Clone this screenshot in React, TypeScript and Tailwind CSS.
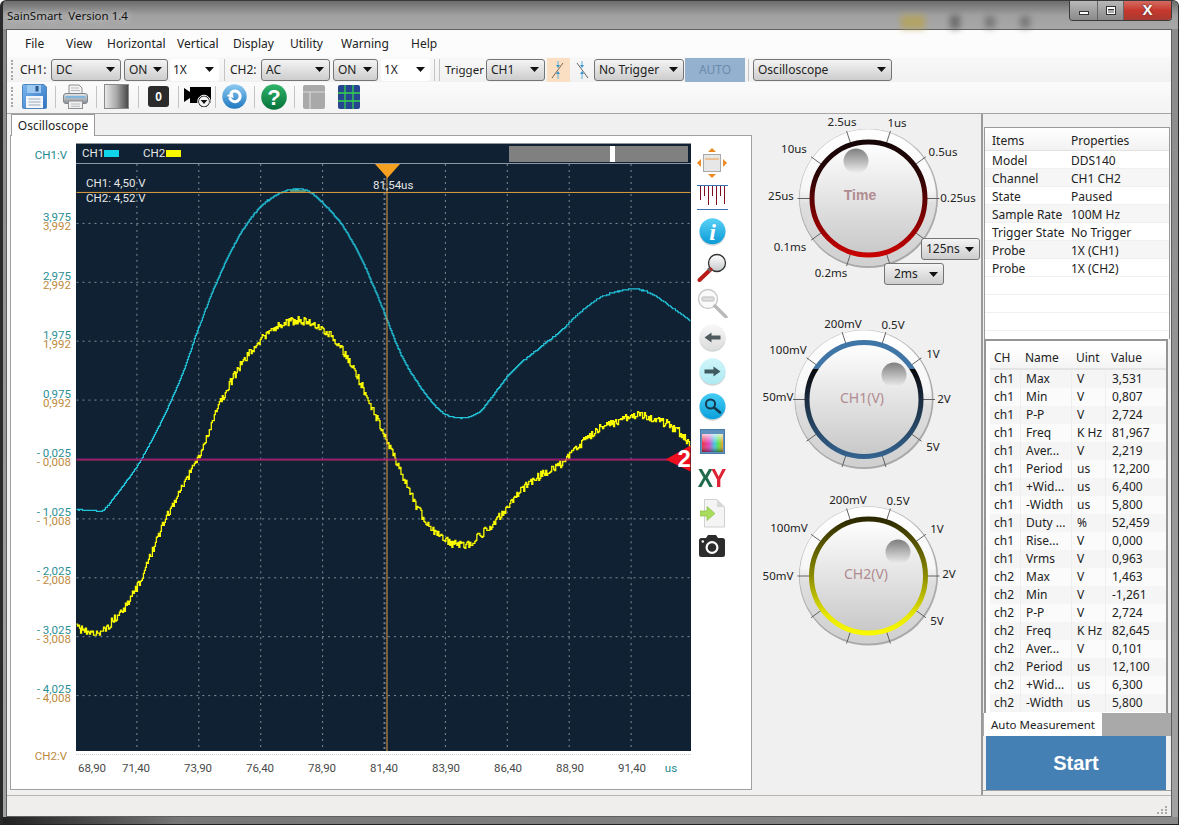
import React from "react";

type P = [number, number];

const cyanPts: P[] = [[76,509],[90,510],[102,510],[112,499],[125,482],[140,460],[160,422],[180,378],[200,322],[220,272],[240,233],[260,206],[280,192],[290,189],[305,189],[320,200],[340,222],[360,256],[380,302],[400,352],[420,386],[440,410],[455,417],[470,416],[482,409],[495,392],[510,373],[525,359],[540,347],[560,331],[580,312],[600,297],[620,290],[635,288],[650,292],[670,305],[690,320]];
const yellowPts: P[] = [[76,628],[90,631],[102,631],[112,621],[125,606],[140,580],[160,530],[180,490],[200,452],[220,402],[240,365],[260,340],[280,325],[300,320],[320,327],[340,346],[360,382],[380,425],[400,470],[420,512],[440,536],[465,545],[480,535],[500,516],[520,491],[540,475],[560,465],[580,445],[600,428],[620,420],[640,415],[660,420],[680,432],[690,443]];

function trace(points: P[], noise: number, seed: number) {
  let s = seed;
  const rnd = () => {
    s = (s * 16807) % 2147483647;
    return s / 2147483647 - 0.5;
  };
  const out: string[] = [];
  let seg = 0;
  for (let x = 76; x <= 690; x += 1) {
    while (seg < points.length - 2 && x > points[seg + 1][0]) seg++;
    const [x0, y0] = points[seg];
    const [x1, y1] = points[seg + 1];
    const prev = points[Math.max(seg - 1, 0)];
    const next = points[Math.min(seg + 2, points.length - 1)];
    const h = x1 - x0;
    const t = (x - x0) / h;
    const m0 = ((y1 - prev[1]) / (x1 - prev[0])) * h;
    const m1 = ((next[1] - y0) / (next[0] - x0)) * h;
    const y =
      (2 * t * t * t - 3 * t * t + 1) * y0 +
      (t * t * t - 2 * t * t + t) * m0 +
      (-2 * t * t * t + 3 * t * t) * y1 +
      (t * t * t - t * t) * m1;
    const v = Math.round(y + rnd() * noise);
    out.push(`${x},${v} ${x + 1},${v}`);
  }
  return out.join(" ");
}

const cyanLine = trace(cyanPts, 1, 12345);
const yellowLine = trace(yellowPts, 8, 777);

const Caret = () => (
  <svg width="9" height="5" viewBox="0 0 9 5" className="shrink-0">
    <path d="M0 0h9L4.5 5z" fill="#111" />
  </svg>
);

function Sel({ label, cls, plain }: { label: string; cls: string; plain?: boolean }) {
  return (
    <div
      className={
        cls +
        " shrink-0 flex items-center justify-between pr-[5px] h-[22px] rounded-[3px] text-[12px] text-[#222] " +
        (plain
          ? "bg-white pl-[3px]"
          : "pl-[4px] border border-[#757575] bg-gradient-to-b from-[#f4f4f4] to-[#cdcdcd]")
      }
    >
      <span>{label}</span>
      <Caret />
    </div>
  );
}

const Sep = ({ cls }: { cls: string }) => <div className={cls + " shrink-0 w-px h-[22px] bg-[#c4c4c4]"} />;

const Grip = ({ cls }: { cls: string }) => (
  <div className={cls + " shrink-0 w-[2px] h-[20px] border-l-2 border-dotted border-[#a8a8a8]"} />
);

/* ---------- toolbar icons ---------- */
const SaveIcon = () => (
  <svg width="25" height="25" viewBox="0 0 25 25" className="ml-[9px] shrink-0">
    <defs>
      <linearGradient id="sv" x1="0" y1="0" x2="1" y2="1">
        <stop offset="0" stopColor="#7db7ee" />
        <stop offset="1" stopColor="#2f72c4" />
      </linearGradient>
    </defs>
    <path d="M0.5 1.5a1 1 0 0 1 1-1H22l2.5 2.5V23.5a1 1 0 0 1-1 1H1.5a1 1 0 0 1-1-1z" fill="url(#sv)" stroke="#4f86c0" />
    <rect x="5" y="1" width="14" height="8" fill="#9dc8ef" />
    <rect x="13.5" y="2" width="3" height="5.5" fill="#26598f" />
    <rect x="4" y="12" width="17" height="12" fill="#f4f7fa" />
    <path d="M6.5 15h12M6.5 18h12M6.5 21h12" stroke="#9aa9b8" />
  </svg>
);
const PrintIcon = () => (
  <svg width="25" height="25" viewBox="0 0 25 25" className="ml-[7px] shrink-0">
    <defs>
      <linearGradient id="pr" x1="0" y1="0" x2="0" y2="1">
        <stop offset="0" stopColor="#e2e5e8" />
        <stop offset="1" stopColor="#878d93" />
      </linearGradient>
    </defs>
    <path d="M6 1h10l3 3v6H6z" fill="#f3f3f3" stroke="#8b8f93" />
    <path d="M8 4h8M8 6.5h9" stroke="#b7bbbf" />
    <rect x="0.5" y="9.5" width="24" height="10" rx="2.5" fill="url(#pr)" stroke="#7e8488" />
    <rect x="2.5" y="12" width="20" height="2" fill="#7fb6e0" />
    <rect x="5.5" y="17" width="14" height="7.5" fill="#f1f1f1" stroke="#8b8f93" />
    <path d="M8 20h9M8 22.3h9" stroke="#b7bbbf" />
  </svg>
);
const GradIcon = () => (
  <div className="ml-[7px] shrink-0 w-[25px] h-[25px] border border-[#8b8b8b] bg-gradient-to-r from-[#e8e8e8] via-[#a8a8a8] to-[#4a4a4a]" />
);
const ZeroIcon = () => (
  <div className="ml-[9px] shrink-0 w-[21px] h-[21px] rounded-[3px] bg-[#2b2b2b] text-white text-[12px] font-bold flex items-center justify-center font-['Liberation_Sans']">
    0
  </div>
);
const RecIcon = () => (
  <svg width="27" height="25" viewBox="0 0 27 25" className="ml-[5px] shrink-0">
    <path d="M0 4l6 4V3h21v16H6v-5l-6 4z" fill="#000" />
    <circle cx="20" cy="17.5" r="6.3" fill="#222" stroke="#fff" />
    <circle cx="20" cy="17.5" r="5" fill="#f4f4f4" />
    <path d="M16.7 16h6.6L20 20z" fill="#111" />
  </svg>
);
const RefreshIcon = () => (
  <svg width="25" height="25" viewBox="0 0 25 25" className="ml-[6px] shrink-0">
    <defs>
      <linearGradient id="rf" x1="0" y1="0" x2="0" y2="1">
        <stop offset="0" stopColor="#8ecbf2" />
        <stop offset="1" stopColor="#1e78c0" />
      </linearGradient>
    </defs>
    <circle cx="12.5" cy="12.5" r="12.2" fill="url(#rf)" />
    <path d="M8 14.5a5.3 5.3 0 1 0 1.2-6" fill="none" stroke="#fff" strokeWidth="3" strokeLinecap="round" />
    <path d="M4.5 12l6-4.5 1 6.5z" fill="#fff" />
  </svg>
);
const HelpIcon = () => (
  <svg width="26" height="26" viewBox="0 0 26 26" className="ml-[6px] shrink-0">
    <defs>
      <linearGradient id="hp" x1="0" y1="0" x2="0" y2="1">
        <stop offset="0" stopColor="#2fb56a" />
        <stop offset="1" stopColor="#06723a" />
      </linearGradient>
    </defs>
    <circle cx="13" cy="13" r="12.8" fill="url(#hp)" />
    <text x="13" y="20.5" textAnchor="middle" fill="#fff" fontSize="22" fontWeight="700" fontFamily="Liberation Sans">?</text>
  </svg>
);
const TableIcon = () => (
  <svg width="22" height="24" viewBox="0 0 22 24" className="ml-[8px] shrink-0">
    <rect width="22" height="24" rx="2" fill="#a9a9a9" />
    <path d="M0 7h22M7 7v17" stroke="#d9d9d9" strokeWidth="1.2" />
  </svg>
);
const GridIcon = () => (
  <svg width="22" height="24" viewBox="0 0 22 24" className="ml-[13px] shrink-0">
    <rect width="22" height="24" rx="2" fill="#26468f" />
    <path d="M0 8h22M0 16h22M7 0v24M15 0v24" stroke="#34d24e" strokeWidth="1.3" />
  </svg>
);

const EdgeUp = () => (
  <svg width="17" height="20" viewBox="0 0 17 20">
    <path d="M2 18L13 3" fill="none" stroke="#6a5a4a" strokeWidth="0.9" />
    <path d="M8 1v5M8 19v-6" stroke="#5fb0dc" strokeWidth="1" />
    <path d="M6 5h4l-2 3zM6 14h4l-2-3z" fill="#3a95c8" />
  </svg>
);
const EdgeDown = () => (
  <svg width="17" height="20" viewBox="0 0 17 20">
    <path d="M3 3l11 15" fill="none" stroke="#555" strokeWidth="0.9" />
    <path d="M8 1v5M8 19v-6" stroke="#5fb0dc" strokeWidth="1" />
    <path d="M6 5h4l-2 3zM6 14h4l-2-3z" fill="#3a95c8" />
  </svg>
);

/* ---------- side icons ---------- */
const Sphere = ({ id, top, bottom, children }: { id: string; top: string; bottom: string; children?: React.ReactNode }) => (
  <svg width="27" height="28" viewBox="0 0 27 28">
    <defs>
      <linearGradient id={id} x1="0" y1="0" x2="0" y2="1">
        <stop offset="0" stopColor={top} />
        <stop offset="1" stopColor={bottom} />
      </linearGradient>
    </defs>
    <ellipse cx="13.5" cy="15" rx="13" ry="12.8" fill="#9aa3a8" opacity="0.45" />
    <circle cx="13.5" cy="13.2" r="13" fill={`url(#${id})`} />
    {children}
  </svg>
);

const sideIcons: { h: string; el: React.ReactNode }[] = [
  {
    h: "h-[34px]",
    el: (
      <svg width="30" height="30" viewBox="0 0 30 30">
        <path d="M15 0l4 4h-8zM15 30l-4-4h8zM0 15l4-4v8zM30 15l-4 4v-8z" fill="#e98a22" />
        <rect x="6.5" y="6.5" width="17" height="17" fill="#e7e7e7" stroke="#a9a9a9" />
        <path d="M8 11h14" stroke="#ef9a3f" strokeWidth="1.2" />
      </svg>
    ),
  },
  {
    h: "h-[35px]",
    el: (
      <svg width="31" height="25" viewBox="0 0 31 25">
        <path d="M0 .5h31M0 24.5h31" stroke="#3f6fb0" />
        <path d="M3.5 1v14M7.5 1v10M11.5 1v19M15.5 1v10M19.5 1v19M23.5 1v10M27.5 1v18" stroke="#7d1020" />
      </svg>
    ),
  },
  {
    h: "h-[34px]",
    el: (
      <Sphere id="inf" top="#5bd2f6" bottom="#0b9ad6">
        <text x="13.5" y="22" textAnchor="middle" fill="#fff" fontSize="24" fontWeight="700" fontStyle="italic" fontFamily="Liberation Serif">i</text>
      </Sphere>
    ),
  },
  {
    h: "h-[37px]",
    el: (
      <svg width="30" height="30" viewBox="0 0 30 30">
        <defs>
          <linearGradient id="mg" x1="0" y1="0" x2="0" y2="1">
            <stop offset="0" stopColor="#fff" />
            <stop offset="1" stopColor="#c4c8ca" />
          </linearGradient>
        </defs>
        <circle cx="20" cy="10" r="8.5" fill="url(#mg)" stroke="#333" strokeWidth="1.3" />
        <path d="M13.5 16.5L2.5 27" stroke="#b81c18" strokeWidth="4" strokeLinecap="round" />
        <path d="M13 16l-1.5 1.5" stroke="#666" strokeWidth="4" />
      </svg>
    ),
  },
  {
    h: "h-[34px]",
    el: (
      <svg width="31" height="30" viewBox="0 0 31 30">
        <circle cx="11" cy="11" r="9.5" fill="#fafafa" stroke="#c9c9c9" strokeWidth="1.4" />
        <rect x="5" y="9" width="12" height="4" rx="1" fill="#dedede" stroke="#bdbdbd" />
        <path d="M18 18l11 11" stroke="#b9b9b9" strokeWidth="3.4" strokeLinecap="round" />
      </svg>
    ),
  },
  {
    h: "h-[35px]",
    el: (
      <Sphere id="bk" top="#f8f8f8" bottom="#dcdcdc">
        <path d="M5.5 13.5l7-5v3h9v4h-9v3z" fill="#4f5a5e" />
      </Sphere>
    ),
  },
  {
    h: "h-[33px]",
    el: (
      <Sphere id="fw" top="#cff5fa" bottom="#aeeaf2">
        <path d="M21.5 13.5l-7-5v3h-9v4h9v3z" fill="#3f5a60" />
      </Sphere>
    ),
  },
  {
    h: "h-[37px]",
    el: (
      <Sphere id="sr" top="#46cdf5" bottom="#0aa0dc">
        <circle cx="11.5" cy="11" r="4.6" fill="none" stroke="#163a4e" strokeWidth="2" />
        <path d="M15 14.5l6 5" stroke="#163a4e" strokeWidth="2.6" strokeLinecap="round" />
      </Sphere>
    ),
  },
  {
    h: "h-[32px]",
    el: (
      <svg width="25" height="25" viewBox="0 0 25 25">
        <defs>
          <linearGradient id="rb" x1="0" y1="0" x2="1" y2="0">
            <stop offset="0" stopColor="#e8303a" />
            <stop offset="0.33" stopColor="#e040c0" />
            <stop offset="0.6" stopColor="#40c8e0" />
            <stop offset="0.8" stopColor="#60e040" />
            <stop offset="1" stopColor="#f0a020" />
          </linearGradient>
          <linearGradient id="rbw" x1="0" y1="0" x2="0" y2="1">
            <stop offset="0" stopColor="#fff" stopOpacity="0.75" />
            <stop offset="0.55" stopColor="#fff" stopOpacity="0" />
            <stop offset="1" stopColor="#000" stopOpacity="0.45" />
          </linearGradient>
        </defs>
        <rect x="0.5" y="0.5" width="24" height="24" fill="#5f91bf" stroke="#4a7aa8" />
        <rect x="2" y="5" width="21" height="18" fill="url(#rb)" />
        <rect x="2" y="5" width="21" height="18" fill="url(#rbw)" />
      </svg>
    ),
  },
  {
    h: "h-[42px]",
    el: (
      <div className="flex font-['Liberation_Sans'] font-bold text-[23px] leading-none h-[21px] items-center tracking-[-2px] pr-[2px] scale-y-[1.1]">
        <span className="text-[#1f6b4c]">X</span>
        <span className="text-[#dd2333]">Y</span>
      </div>
    ),
  },
  {
    h: "h-[29px]",
    el: (
      <svg width="25" height="29" viewBox="0 0 25 29">
        <path d="M4.5 .5H17l7.5 7.5v20H4.5z" fill="#f4f4f4" stroke="#d0d0d0" />
        <path d="M17 .5V8h7.5z" fill="#d8d8d8" />
        <path d="M0 12h7V7.5L15 14.5 7 21.5V17H0z" fill="#a9dc5c" stroke="#7fb83c" strokeWidth=".6" />
      </svg>
    ),
  },
  {
    h: "h-[36px]",
    el: (
      <svg width="26" height="26" viewBox="0 0 26 26">
        <path d="M2.5 5h4.5l2-3h8l2 3h4.500a2.500 2.500 0 0 1 2.500 2.500V21.500a2.500 2.500 0 0 1-2.500 2.500H2.500A2.500 2.500 0 0 1 0 21.500V7.500A2.500 2.500 0 0 1 2.500 5z" fill="#2c2c2c" />
        <circle cx="13" cy="14.500" r="6.500" fill="#fff" />
        <circle cx="13" cy="14.500" r="4.300" fill="#2c2c2c" />
        <circle cx="3.800" cy="8.500" r="1.200" fill="#fff" />
      </svg>
    ),
  },
];

/* ---------- dials ---------- */
type DialLabel = [string, number, number];

function Dial({
  id,
  cls,
  vb,
  cx,
  cy,
  ringR,
  stops,
  dim,
  title,
  tx,
  ty,
  bold,
  labels,
}: {
  id: string;
  cls: string;
  vb: string;
  cx: number;
  cy: number;
  ringR: number;
  stops: [number, string][];
  dim: P;
  title: string;
  tx: number;
  ty: number;
  bold?: boolean;
  labels: DialLabel[];
}) {
  const angles = [18, 54, 90, 126, 162, 198, 234, 270, 306, 342];
  return (
    <svg viewBox={vb} className={cls + " block shrink-0"}>
      <defs>
        <linearGradient id={id + "b"} x1="0" y1="0" x2="0" y2="1">
          <stop offset="0" stopColor="#ffffff" />
          <stop offset="0.45" stopColor="#f6f6f6" />
          <stop offset="0.55" stopColor="#dedede" />
          <stop offset="1" stopColor="#d0d0d0" />
        </linearGradient>
        <linearGradient id={id + "f"} x1="0" y1="0" x2="0" y2="1">
          <stop offset="0" stopColor="#ffffff" />
          <stop offset="1" stopColor="#c8c8c8" />
        </linearGradient>
        <linearGradient id={id + "r"} gradientUnits="userSpaceOnUse" x1="0" y1={cy - ringR} x2="0" y2={cy + ringR}>
          {stops.map(([o, c]) => (
            <stop key={o} offset={o} stopColor={c} />
          ))}
        </linearGradient>
        <linearGradient id={id + "d"} x1="0" y1="0" x2="0" y2="1">
          <stop offset="0" stopColor="#7e7e7e" />
          <stop offset="1" stopColor="#f0f0f0" />
        </linearGradient>
      </defs>
      <circle cx={cx} cy={cy} r="69.5" fill="#a9a9a9" />
      <circle cx={cx - 0.5} cy={cy - 1} r="68.5" fill="#d6d6d6" />
      <circle cx={cx - 0.5} cy={cy - 1} r="68" fill={`url(#${id}b)`} />
      {angles.map((a) => {
        const r = (a * Math.PI) / 180;
        return (
          <line
            key={a}
            x1={cx + Math.sin(r) * ringR}
            y1={cy - Math.cos(r) * ringR}
            x2={cx + Math.sin(r) * 71}
            y2={cy - Math.cos(r) * 71}
            stroke="#555"
            strokeWidth="0.9"
          />
        );
      })}
      <circle cx={cx} cy={cy} r={ringR} fill={`url(#${id}f)`} stroke={`url(#${id}r)`} strokeWidth="5" />
      <circle cx={dim[0]} cy={dim[1]} r="12.500" fill={`url(#${id}d)`} />
      <text
        x={tx}
        y={ty}
        textAnchor="middle"
        dominantBaseline="central"
        fill="#b18b90"
        className={bold ? "font-['Liberation_Sans'] font-bold text-[14px]" : "text-[14px]"}
      >
        {title}
      </text>
      {labels.map(([t, x, y]) => (
        <text key={t} x={x} y={y} textAnchor="middle" dominantBaseline="central" fill="#222" className="text-[11.500px]">
          {t}
        </text>
      ))}
    </svg>
  );
}

/* ---------- tables ---------- */
const props: [string, string][] = [
  ["Model", "DDS140"],
  ["Channel", "CH1 CH2"],
  ["State", "Paused"],
  ["Sample Rate", "100M Hz"],
  ["Trigger State", "No Trigger"],
  ["Probe", "1X (CH1)"],
  ["Probe", "1X (CH2)"],
  ["", ""],
  ["", ""],
  ["", ""],
];

const meas: [string, string, string, string][] = [
  ["ch1", "Max", "V", "3,531"],
  ["ch1", "Min", "V", "0,807"],
  ["ch1", "P-P", "V", "2,724"],
  ["ch1", "Freq", "K Hz", "81,967"],
  ["ch1", "Aver...", "V", "2,219"],
  ["ch1", "Period", "us", "12,200"],
  ["ch1", "+Wid...", "us", "6,400"],
  ["ch1", "-Width", "us", "5,800"],
  ["ch1", "Duty ...", "%", "52,459"],
  ["ch1", "Rise...", "V", "0,000"],
  ["ch1", "Vrms", "V", "0,963"],
  ["ch2", "Max", "V", "1,463"],
  ["ch2", "Min", "V", "-1,261"],
  ["ch2", "P-P", "V", "2,724"],
  ["ch2", "Freq", "K Hz", "82,645"],
  ["ch2", "Aver...", "V", "0,101"],
  ["ch2", "Period", "us", "12,100"],
  ["ch2", "+Wid...", "us", "6,300"],
  ["ch2", "-Width", "us", "5,800"],
];

const yLabels: [string, string][] = [
  ["3,975", "3,992"],
  ["2,975", "2,992"],
  ["1,975", "1,992"],
  ["0,975", "0,992"],
  ["- 0,025", "- 0,008"],
  ["- 1,025", "- 1,008"],
  ["- 2,025", "- 2,008"],
  ["- 3,025", "- 3,008"],
  ["- 4,025", "- 4,008"],
];

const gridX = [136.5, 198.5, 260.5, 322.5, 445.5, 507.5, 569.5, 631.5];
const gridY = [222.5, 281.5, 340.5, 399.5, 518.5, 577.5, 636.5, 695.5];
const xLabels = ["73,90", "76,40", "78,90", "81,40", "83,90", "86,40", "88,90", "91,40"];

export default function App() {
  return (
    <div className="w-[1179px] h-[825px] overflow-hidden flex flex-col font-['Noto_Sans',sans-serif] text-[#222] border-t border-b border-r border-l-[3px] border-t-[#3a3a3a] border-b-[#222] border-r-[#2a2a2a] border-l-[#2a2a2a] rounded-t-[6px] bg-gradient-to-b from-[#8a8a8a] to-[#a2a2a2]">
      {/* title bar */}
      <div className="h-[28px] shrink-0 flex justify-between bg-gradient-to-b from-[#6c6c6c] via-[#a0a0a0] to-[#a8a8a8]">
        <div className="pl-[4px] pt-[7px] text-[11.500px] leading-[16px] whitespace-pre text-[#111] [text-shadow:0_0_6px_#e8e8e8]">
          SainSmart  Version 1.4
        </div>
        <div className="flex items-center gap-[25px] mt-[14px] ml-auto mr-[39px] blur-[3px] opacity-70">
          <div className="w-[24px] h-[14px] bg-[#b8a24a]" />
          <div className="w-[10px] h-[14px] bg-[#555]" />
          <div className="w-[10px] h-[12px] bg-[#666]" />
          <div className="w-[10px] h-[12px] bg-[#666]" />
        </div>
        <div className="flex h-[20px] self-start shrink-0 mr-[6px] rounded-b-[4px] border border-t-0 border-[#3c3c3c] overflow-hidden">
          <div className="w-[28px] flex items-center justify-center border-r border-[#666] bg-gradient-to-b from-[#b8b8b8] to-[#8a8a8a]">
            <div className="w-[10px] h-[4px] mt-[4px] bg-white border border-[#333]" />
          </div>
          <div className="w-[26px] flex items-center justify-center border-r border-[#666] bg-gradient-to-b from-[#b8b8b8] to-[#8a8a8a]">
            <div className="w-[10px] h-[9px] bg-white border border-[#333] flex items-center justify-center">
              <div className="w-[6px] h-[4px] bg-[#aaa] border-t border-[#333]" />
            </div>
          </div>
          <div className="w-[47px] flex items-center justify-center bg-gradient-to-b from-[#d26a60] via-[#c7372c] to-[#a83a30] text-white text-[15px] font-bold font-['Liberation_Sans'] [text-shadow:0_0_2px_#333]">
            X
          </div>
        </div>
      </div>

      {/* client area */}
      <div className="flex-1 min-h-0 ml-[3px] mr-[6px] border border-[#5f5f5f] bg-white flex flex-col">
        {/* menu */}
        <div className="h-[27px] shrink-0 bg-[#fcfcfc] flex items-center pl-[18px] text-[12px] pt-[1px]">
          <span className="w-[41px]">File</span>
          <span className="w-[41px]">View</span>
          <span className="w-[70px]">Horizontal</span>
          <span className="w-[56px]">Vertical</span>
          <span className="w-[57px]">Display</span>
          <span className="w-[51px]">Utility</span>
          <span className="w-[70px]">Warning</span>
          <span>Help</span>
        </div>

        {/* toolbar 1 */}
        <div className="h-[25px] shrink-0 bg-gradient-to-b from-[#f8f8f8] to-[#f1f1f1] flex items-center text-[12px] whitespace-nowrap">
          <Grip cls="ml-[4px]" />
          <span className="ml-[7px] w-[31px] shrink-0">CH1:</span>
          <Sel label="DC" cls="w-[70px]" />
          <Sel label="ON" cls="ml-[3px] w-[44px]" />
          <Sel label="1X" cls="ml-[2px] w-[49px]" plain />
          <Sep cls="ml-[5px]" />
          <span className="ml-[5px] w-[31px] shrink-0">CH2:</span>
          <Sel label="AC" cls="w-[69px]" />
          <Sel label="ON" cls="ml-[3px] w-[45px]" />
          <Sel label="1X" cls="ml-[3px] w-[49px]" plain />
          <Sep cls="ml-[4px]" />
          <Sep cls="ml-[4px]" />
          <span className="ml-[5px] w-[41px] shrink-0 text-[11.500px]">Trigger</span>
          <Sel label="CH1" cls="w-[59px]" />
          <div className="ml-[2px] w-[23px] h-[24px] shrink-0 bg-[#fbdfc2] flex items-center justify-center">
            <EdgeUp />
          </div>
          <div className="ml-[2px] w-[20px] h-[24px] shrink-0 flex items-center justify-center">
            <EdgeDown />
          </div>
          <Sel label="No Trigger" cls="ml-[2px] w-[90px]" />
          <div className="ml-[1px] w-[60px] h-[24px] shrink-0 bg-[#94b1d0] text-[#6c8bac] flex items-center justify-center">AUTO</div>
          <Sep cls="ml-[3px]" />
          <Sel label="Oscilloscope" cls="ml-[4px] w-[139px]" />
        </div>

        {/* toolbar 2 */}
        <div className="h-[31px] shrink-0 bg-gradient-to-b from-[#fbfbfb] to-[#f3f3f3] flex items-center pb-[2px]">
          <Grip cls="ml-[4px]" />
          <SaveIcon />
          <Sep cls="ml-[8px]" />
          <PrintIcon />
          <Sep cls="ml-[8px]" />
          <GradIcon />
          <Sep cls="ml-[9px]" />
          <ZeroIcon />
          <Sep cls="ml-[9px]" />
          <RecIcon />
          <Sep cls="ml-[4px]" />
          <RefreshIcon />
          <Sep cls="ml-[7px]" />
          <HelpIcon />
          <Sep cls="ml-[7px]" />
          <TableIcon />
          <GridIcon />
        </div>

        {/* main */}
        <div className="flex-1 min-h-0 flex border-t border-[#a5a5a5] bg-[#f0f0f0]">
          {/* scope */}
          <div className="w-[746px] shrink-0 flex flex-col pl-[3px] pr-[1px]">
            <div className="h-[21px] shrink-0 flex pl-[1px]">
              <div className="w-[84px] h-[22px] bg-white border border-b-0 border-[#9a9a9a] text-[12px] flex items-center justify-center z-10">
                Oscilloscope
              </div>
            </div>
            <div className="h-[655px] shrink-0 bg-white border-t border-x border-b border-[#a0a0a0] flex flex-col pt-[7px]">
              <div className="flex h-[620px] shrink-0">
                {/* left axis */}
                <div className="w-[65px] shrink-0 flex flex-col pr-[5px] text-right font-['Roboto'] text-[11.500px] leading-[9px]">
                  <div className="text-[#1b8a8f] leading-[14px] pt-[5px] pr-[4px] h-[69.500px]">CH1:V</div>
                  {yLabels.map(([a, b]) => (
                    <div key={a} className="h-[59px] shrink-0">
                      <div className="text-[#2a8f96]">{a}</div>
                      <div className="text-[#c08a3e]">{b}</div>
                    </div>
                  ))}
                  <div className="text-[#c08a3e] leading-[14px] pr-[4px] mt-[5px]">CH2:V</div>
                </div>

                {/* plot */}
                <div className="w-[615px] shrink-0 flex flex-col">
                  <div className="relative h-[608px] shrink-0 bg-[#0f2133] border-t border-[#8f979c] flex flex-col">
                    <div className="h-[20px] shrink-0 border-b border-[#8a98a5] flex items-center text-[11.500px] font-['Roboto'] text-[#e6e6e6] pl-[6px]">
                      <span className="w-[22px]">CH1</span>
                      <span className="w-[15px] h-[7px] bg-[#10d4ea]" />
                      <span className="ml-[24px] w-[23px]">CH2</span>
                      <span className="w-[15px] h-[7px] bg-[#f8f800]" />
                      <div className="ml-[328px] w-[179px] h-[16px] flex bg-[#808080]">
                        <div className="ml-[101px] w-[5px] bg-white" />
                      </div>
                    </div>
                    <svg viewBox="76 163 615 588" className="block w-[615px] h-[587px]">
                      {gridY.map((y) => (
                        <line key={y} x1="76" x2="691" y1={y} y2={y} stroke="#7f9098" strokeDasharray="2 4" />
                      ))}
                      {gridX.map((x) => (
                        <line key={x} x1={x} x2={x} y1="163" y2="751" stroke="#7f9098" strokeDasharray="2 4" />
                      ))}
                      <line x1="384.500" x2="384.500" y1="177" y2="751" stroke="#6d7a84" strokeWidth="2" strokeDasharray="2 3" />
                      <polyline points={yellowLine} fill="none" stroke="#fbfb00" strokeWidth="1.300" />
                      <polyline points={cyanLine} fill="none" stroke="#22c4da" strokeWidth="1.200" />
                      <line x1="76" x2="691" y1="191.500" y2="191.500" stroke="#e0a040" />
                      <line x1="387" x2="387" y1="176" y2="751" stroke="#e8a040" />
                      <path d="M290 190h16" stroke="#6fb28a" strokeWidth="1.600" />
                      <path d="M375 163h25l-12.500 14z" fill="#f5a020" />
                      <line x1="76" x2="670" y1="458.500" y2="458.500" stroke="#8a1890" />
                      <line x1="76" x2="670" y1="459.500" y2="459.500" stroke="#d42a66" />
                      <path d="M666 459l25-14v26z" fill="#ee1020" />
                      <text x="678" y="467" fill="#fff" className="font-['Liberation_Sans'] font-bold text-[24px]">2</text>
                    </svg>
                    {/* cursor read-out over the trace */}
                    <div className="absolute left-[10px] top-[32px] text-[11.500px] leading-[15px] font-['Roboto'] text-[#e6e6e6]">
                      <div>CH1: 4,50 V</div>
                      <div>CH2: 4,52 V</div>
                    </div>
                    <div className="absolute left-[297px] top-[35px] text-[11.500px] leading-[13px] font-['Roboto'] text-[#e6e6e6]">81,54us</div>
                  </div>
                  <div className="mt-[3px] border-t border-dotted border-[#cfcfcf]" />
                </div>

                {/* tool icons */}
                <div className="w-[42px] shrink-0 flex flex-col items-center pt-[3px]">
                  {sideIcons.map((ic, i) => (
                    <div key={i} className={ic.h + " w-full shrink-0 flex items-center justify-center"}>
                      {ic.el}
                    </div>
                  ))}
                </div>
              </div>

              {/* x axis */}
              <div className="flex h-[12px] pl-[56px] text-[11.500px] leading-[10px] font-['Roboto'] text-[#4a4a4a]">
                <span className="w-[50px] text-center">68,90</span>
                <span className="w-[38px] text-center mr-[12px]">71,40</span>
                {xLabels.map((t) => (
                  <span key={t} className="w-[62px] text-center">{t}</span>
                ))}
                <span className="w-[40px] text-center -translate-x-[12px] text-[#1b8a8f]">us</span>
              </div>
            </div>
          </div>

          {/* dials */}
          <div className="w-[228px] shrink-0 flex flex-col bg-[#f0f0f0]">
            <div className="relative h-[187px] shrink-0">
              <Dial
                id="t"
                cls="w-[228px] h-[187px]"
                vb="753 113 228 187"
                cx={868.5}
                cy={197.5}
                ringR={56.5}
                stops={[[0, "#160606"], [0.3, "#2a0505"], [0.7, "#880000"], [1, "#c80000"]]}
                dim={[856, 160]}
                title="Time"
                tx={860}
                ty={194}
                bold
                labels={[["2.5us", 842, 120], ["1us", 897, 121], ["10us", 794, 147], ["0.5us", 943, 150], ["25us", 781, 194], ["0.25us", 958, 196], ["0.1ms", 790, 245], ["0.2ms", 831, 271]]}
              />
              <Sel label="125ns" cls="absolute left-[168px] top-[124px] w-[59px]" />
              <Sel label="2ms" cls="absolute left-[131px] top-[149px] w-[60px] pl-[9px]" />
            </div>
            <Dial
              id="c1"
              cls="w-[228px] h-[180px]"
              vb="753 300 228 180"
              cx={864}
              cy={398.5}
              ringR={57}
              stops={[[0, "#3f76a6"], [0.228, "#3f76a6"], [0.229, "#080808"], [0.5, "#1b2c3e"], [1, "#33628e"]]}
              dim={[894, 374]}
              title="CH1(V)"
              tx={862}
              ty={396}
              labels={[["200mV", 843, 322], ["0.5V", 893, 323], ["100mV", 788, 348], ["1V", 933, 352], ["50mV", 778, 395], ["2V", 944, 397], ["5V", 933, 445]]}
            />
            <Dial
              id="c2"
              cls="w-[228px] h-[180px]"
              vb="753 480 228 180"
              cx={868.5}
              cy={575}
              ringR={57}
              stops={[[0, "#2c2800"], [0.5, "#8c8c00"], [0.85, "#e8e800"], [1, "#f8f800"]]}
              dim={[898, 551]}
              title="CH2(V)"
              tx={866}
              ty={572}
              labels={[["200mV", 848, 498], ["0.5V", 898, 499], ["100mV", 789, 526], ["1V", 937, 527], ["50mV", 778, 574], ["2V", 949, 572], ["5V", 937, 619]]}
            />
          </div>

          <div className="w-[2px] shrink-0 bg-[#9a9a9a]" />

          {/* right column */}
          <div className="w-[188px] shrink-0 flex flex-col text-[12px] bg-[#f0f0f0]">
            <div className="h-[13px] shrink-0" />
            {/* properties */}
            <div className="h-[212px] shrink-0 ml-[1px] mr-[1px] bg-white border-t border-x border-[#9a9a9a] overflow-hidden">
              <div className="flex h-[23px] bg-gradient-to-b from-white to-[#f2f2f2] border-b border-[#e2e2e2] items-center pt-[3px]">
                <span className="w-[81px] pl-[7px] shrink-0">Items</span>
                <span className="pl-[5px]">Properties</span>
              </div>
              {props.map(([k, v], i) => (
                <div key={i} className={"flex h-[18px] items-center border-b border-[#f0f0f0] pt-[3px] " + (i % 2 === 1 && i < 7 ? "bg-[#f6f6f6]" : "bg-white")}>
                  <span className="w-[81px] pl-[7px] shrink-0">{k}</span>
                  <span className="pl-[5px]">{v}</span>
                </div>
              ))}
            </div>
            {/* measurements */}
            <div className="h-[374px] shrink-0 ml-[1px] mr-[3px] bg-white border-t-2 border-x-2 border-[#959595] pt-[6px] pl-[4px] overflow-hidden">
              <div className="flex h-[23px] items-center border-b-2 border-[#e4e4e4] bg-gradient-to-b from-white to-[#f4f4f4]">
                <span className="w-[30px] pl-[4px] shrink-0">CH</span>
                <span className="w-[51px] pl-[5px] shrink-0">Name</span>
                <span className="w-[34px] pl-[5px] shrink-0">Uint</span>
                <span className="pl-[6px]">Value</span>
              </div>
              {meas.map(([a, b, c, d], i) => (
                <div key={i} className={"flex h-[18px] items-center " + (i % 2 === 0 ? "bg-[#f5f5f5]" : "bg-[#fbfbfb]")}>
                  <span className="w-[30px] pl-[4px] shrink-0">{a}</span>
                  <span className="w-[51px] pl-[5px] shrink-0 border-l border-[#eeeeee]">{b}</span>
                  <span className="w-[34px] pl-[5px] shrink-0 border-l border-[#eeeeee]">{c}</span>
                  <span className="pl-[6px] border-l border-[#eeeeee]">{d}</span>
                </div>
              ))}
            </div>
            <div className="h-[23px] shrink-0 flex bg-[#a9a9a9]">
              <div className="ml-[1px] w-[118px] bg-white flex items-center justify-center text-[11.500px]">Auto Measurement</div>
            </div>
            <div className="h-[54px] shrink-0 ml-[3px] mr-[5px] bg-[#4580b5] flex items-center justify-center text-white text-[20px] font-bold font-['Liberation_Sans']">
              Start
            </div>
            <div className="h-[5px] shrink-0 bg-[#f0f0f0] border-t border-[#a0a0a0]" />
          </div>
        </div>

        {/* status bar */}
        <div className="h-[21px] shrink-0 bg-[#f0eeed] border-t border-[#b5b5b5] flex items-end justify-end pr-[3px] pb-[2px]">
          <div className="grid grid-cols-3 gap-[1px] w-[11px]">
            <span />
            <span />
            <span className="w-[2px] h-[2px] bg-[#aaa]" />
            <span />
            <span className="w-[2px] h-[2px] bg-[#aaa]" />
            <span className="w-[2px] h-[2px] bg-[#aaa]" />
            <span className="w-[2px] h-[2px] bg-[#aaa]" />
            <span className="w-[2px] h-[2px] bg-[#aaa]" />
            <span className="w-[2px] h-[2px] bg-[#aaa]" />
          </div>
        </div>
      </div>

      {/* bottom frame */}
      <div className="h-[7px] shrink-0 bg-gradient-to-r from-[#222] via-[#777] via-15% to-[#8a8a8a]" />
    </div>
  );
}
